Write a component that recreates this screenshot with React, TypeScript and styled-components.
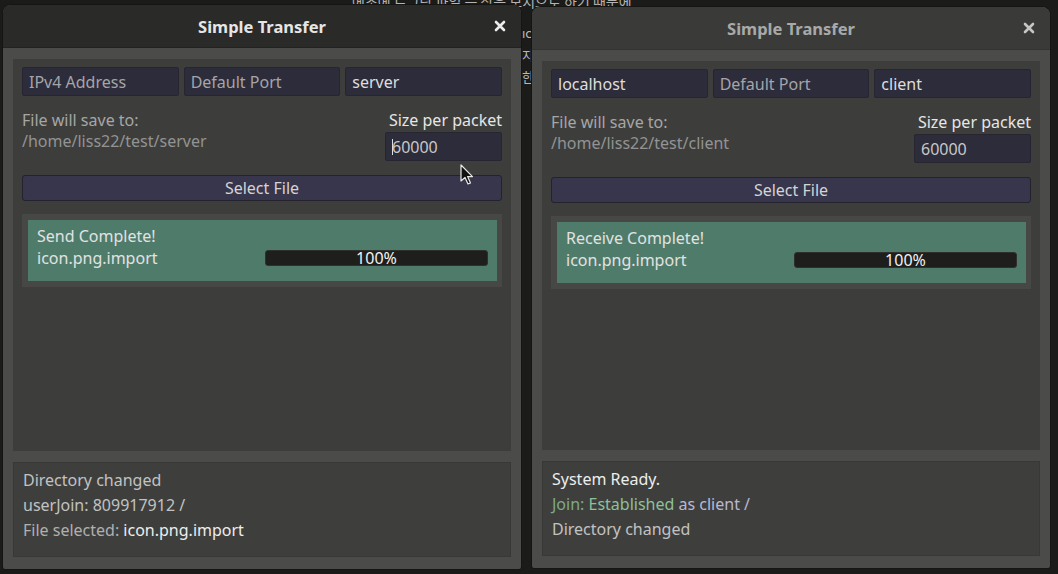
import styled, { createGlobalStyle } from 'styled-components'

const GlobalStyle = createGlobalStyle`
  html, body {
    margin: 0;
    padding: 0;
    background: #1b1c1a;
  }
  * { box-sizing: border-box; }
`

const Desktop = styled.div`
  position: relative;
  width: 1058px;
  height: 574px;
  overflow: hidden;
  background: #1b1c1a;
  font-family: 'Noto Sans', 'Open Sans', 'Noto Sans CJK KR', sans-serif;
  font-size: 16px;
`

// editor text peeking out behind the two windows
const Backdrop = styled.div`
  position: absolute;
  left: 352px;
  top: -9px;
  color: #b4b4b4;
  font-family: 'Noto Sans CJK KR', 'Noto Sans', sans-serif;
  font-size: 14px;
  line-height: 21px;
  white-space: pre;
`

const GapText = styled.div`
  position: absolute;
  left: 522px;
  top: 22px;
  color: #b8b8b8;
  font-family: 'Noto Sans CJK KR', 'Noto Sans', sans-serif;
  font-size: 13px;
  line-height: 22px;
  white-space: pre;
`

const Window = styled.section<{ $x: number; $y: number; $h: number }>`
  position: absolute;
  left: ${p => p.$x}px;
  top: ${p => p.$y}px;
  width: 518px;
  height: ${p => p.$h}px;
  display: flex;
  flex-direction: column;
  background: #4b4c4a;
  border-radius: 8px 8px 2px 2px;
  overflow: hidden;
  box-shadow: 0 0 0 1px #151614;
`

const TitleBar = styled.header<{ $active?: boolean }>`
  position: relative;
  flex-shrink: 0;
  height: 43px;
  display: flex;
  align-items: center;
  justify-content: center;
  background: ${p => (p.$active ? '#2a2a29' : '#3a3b39')};
  border-bottom: 1px solid ${p => (p.$active ? '#222221' : '#333432')};
`

const Title = styled.h1<{ $active?: boolean }>`
  margin: 0;
  font-size: 16.5px;
  font-weight: 700;
  color: ${p => (p.$active ? '#e6e6e6' : '#a9a9a9')};
`

const CloseButton = styled.button<{ $active?: boolean }>`
  position: absolute;
  right: 14px;
  top: 50%;
  transform: translateY(-50%);
  width: 14px;
  height: 14px;
  padding: 0;
  border: 0;
  background: none;
  display: flex;
  align-items: center;
  justify-content: center;
  color: ${p => (p.$active ? '#ececec' : '#c6c6c6')};
`

const Body = styled.div`
  flex: 1;
  display: flex;
  flex-direction: column;
  gap: 11px;
  padding: 11px 10px 12px 10px;
  min-height: 0;
`

const MainPanel = styled.div`
  flex: 1;
  display: flex;
  flex-direction: column;
  padding: 8px 9px 0 9px;
  background: #3d3e3c;
`

const FieldRow = styled.div`
  display: grid;
  grid-template-columns: repeat(3, 1fr);
  gap: 5px;
`

const Field = styled.div<{ $dim?: boolean }>`
  position: relative;
  height: 29px;
  display: flex;
  align-items: center;
  padding: 0 6px;
  background: #2d2c3a;
  border: 1px solid #262531;
  border-radius: 2px;
  color: ${p => (p.$dim ? '#a5a5a9' : '#dedede')};
  white-space: nowrap;
  overflow: hidden;
`

const InfoRow = styled.div`
  display: flex;
  justify-content: space-between;
  margin-top: 14px;
`

const SaveInfo = styled.div`
  line-height: 21px;
  color: #a6a6a6;
`

const SavePath = styled.div`
  color: #939393;
`

const PacketColumn = styled.div`
  width: 117px;
  display: flex;
  flex-direction: column;
  align-items: flex-end;
`

const PacketLabel = styled.div`
  line-height: 21px;
  color: #e6e6e6;
  white-space: nowrap;
`

const PacketField = styled(Field)`
  width: 117px;
  margin-top: 1px;
  color: #c8c8c8;
`

const Caret = styled.span`
  position: absolute;
  left: 6px;
  top: 6px;
  width: 1px;
  height: 16px;
  background: #dcdcdc;
`

const SelectButton = styled.button`
  margin-top: 14px;
  height: 26px;
  width: 100%;
  padding: 0;
  background: #37364c;
  border: 1px solid #23222d;
  border-radius: 3px;
  font: inherit;
  color: #d4d4d4;
  display: flex;
  align-items: center;
  justify-content: center;
`

const TransferCard = styled.div`
  margin-top: 13px;
  padding: 6px 5px 6px 6px;
  background: #474846;
`

const TransferInner = styled.div`
  padding: 5px 9px 12px 9px;
  background: #4f7c6a;
  color: #e2e2e2;
`

const StatusLine = styled.div`
  line-height: 22px;
`

const FileRow = styled.div`
  display: flex;
  align-items: center;
  justify-content: space-between;
  line-height: 22px;
`

const ProgressTrack = styled.div`
  width: 223px;
  height: 16px;
  display: flex;
  align-items: center;
  justify-content: center;
  background: #1e1f1d;
  border: 1px solid #2f302e;
  border-radius: 3px;
  font-size: 16px;
  line-height: 16px;
  color: #f2f2f2;
`

const LogPanel = styled.div`
  flex-shrink: 0;
  height: 95px;
  padding: 5px 9px;
  background: #3e3f3d;
  border: 1px solid #383937;
  line-height: 25px;
  color: #c2c2c2;
`

const LogLine = styled.div``

const Tone = styled.span<{ $tone: 'bright' | 'green' | 'greenHi' | 'lavender' | 'muted' }>`
  color: ${p =>
    ({
      bright: '#ededed',
      green: '#7fa987',
      greenHi: '#8fbf99',
      lavender: '#b9b8d2',
      muted: '#b0b0b0',
    })[p.$tone]};
`

const Pointer = styled.svg`
  position: absolute;
  left: 460px;
  top: 164px;
`

function CloseIcon() {
  return (
    <svg width="12" height="12" viewBox="0 0 12 12">
      <path d="M2 2 L10 10 M10 2 L2 10" stroke="currentColor" strokeWidth="2.6" strokeLinecap="round" />
    </svg>
  )
}

type TransferWindowProps = {
  x: number
  y: number
  h: number
  active?: boolean
  host: string
  hostDim?: boolean
  role: string
  path: string
  caret?: boolean
  status: string
  log: React.ReactNode
}

function TransferWindow({ x, y, h, active, host, hostDim, role, path, caret, status, log }: TransferWindowProps) {
  return (
    <Window $x={x} $y={y} $h={h}>
      <TitleBar $active={active}>
        <Title $active={active}>Simple Transfer</Title>
        <CloseButton $active={active} aria-label="close">
          <CloseIcon />
        </CloseButton>
      </TitleBar>
      <Body>
        <MainPanel>
          <FieldRow>
            <Field $dim={hostDim}>{host}</Field>
            <Field $dim>Default Port</Field>
            <Field>{role}</Field>
          </FieldRow>
          <InfoRow>
            <SaveInfo>
              <div>File will save to:</div>
              <SavePath>{path}</SavePath>
            </SaveInfo>
            <PacketColumn>
              <PacketLabel>Size per packet</PacketLabel>
              <PacketField>
                {caret && <Caret />}
                60000
              </PacketField>
            </PacketColumn>
          </InfoRow>
          <SelectButton>Select File</SelectButton>
          <TransferCard>
            <TransferInner>
              <StatusLine>{status}</StatusLine>
              <FileRow>
                <span>icon.png.import</span>
                <ProgressTrack>100%</ProgressTrack>
              </FileRow>
            </TransferInner>
          </TransferCard>
        </MainPanel>
        <LogPanel>{log}</LogPanel>
      </Body>
    </Window>
  )
}

export default function App() {
  return (
    <Desktop>
      <GlobalStyle />
      <Backdrop>에초에 로그랑 파일 는 상은 모지으로 하기 때문에</Backdrop>
      <GapText>{'ıc\n지\n한'}</GapText>

      <TransferWindow
        x={3}
        y={5}
        h={564}
        active
        host="IPv4 Address"
        hostDim
        role="server"
        path="/home/liss22/test/server"
        caret
        status="Send Complete!"
        log={
          <>
            <LogLine>Directory changed</LogLine>
            <LogLine>userJoin: 809917912 /</LogLine>
            <LogLine>
              <Tone $tone="muted">File selected: </Tone>
              <Tone $tone="bright">icon.png.import</Tone>
            </LogLine>
          </>
        }
      />

      <TransferWindow
        x={532}
        y={7}
        h={561}
        host="localhost"
        role="client"
        path="/home/liss22/test/client"
        status="Receive Complete!"
        log={
          <>
            <LogLine>
              <Tone $tone="bright">System Ready.</Tone>
            </LogLine>
            <LogLine>
              <Tone $tone="green">Join: </Tone>
              <Tone $tone="greenHi">Established</Tone>
              <Tone $tone="lavender"> as client /</Tone>
            </LogLine>
            <LogLine>Directory changed</LogLine>
          </>
        }
      />

      <Pointer width="14" height="22" viewBox="0 0 14 22">
        <path
          d="M1 1 L1 17 L5 13.5 L8 20 L10.5 19 L7.6 12.6 L12.5 12.6 Z"
          fill="#111"
          stroke="#e8e8e8"
          strokeWidth="1.2"
          strokeLinejoin="round"
        />
      </Pointer>
    </Desktop>
  )
}
